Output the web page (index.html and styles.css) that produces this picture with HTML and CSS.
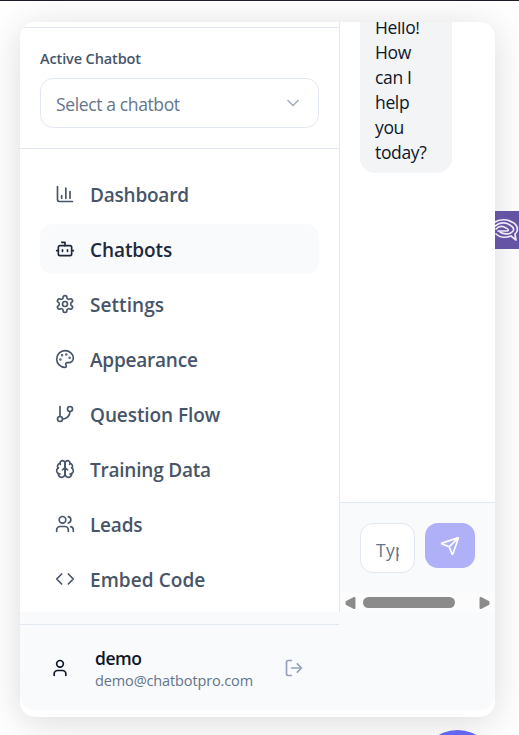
FILE: index.html
```html
<!DOCTYPE html>
<html lang="en">
<head>
<meta charset="utf-8">
<title>Chatbots</title>
<link rel="stylesheet" href="styles.css">
</head>
<body>
<div class="card">
  <div class="main">
    <aside class="sidebar">
      <section class="picker">
        <label class="picker-label">Active Chatbot</label>
        <div class="select"><span>Select a chatbot</span>
          <svg class="chevron" viewBox="0 0 24 24"><path d="m6 9 6 6 6-6"/></svg></div>
      </section>
      <nav class="nav">
        <a class="item"><svg class="icon" viewBox="0 0 24 24"><path d="M3 3v16a2 2 0 0 0 2 2h16M18 17V9M13 17V5M8 17v-3"/></svg><span class="tight">Dashboard</span></a>
        <a class="item active"><svg class="icon" viewBox="0 0 24 24"><path d="M12 8V4H8"/><rect width="16" height="12" x="4" y="8" rx="2"/><path d="M2 14h2M20 14h2M15 13v2M9 13v2"/></svg><span>Chatbots</span></a>
        <a class="item"><svg class="icon" viewBox="0 0 24 24"><path d="M12.22 2h-.44a2 2 0 0 0-2 2v.18a2 2 0 0 1-1 1.73l-.43.25a2 2 0 0 1-2 0l-.15-.08a2 2 0 0 0-2.73.73l-.22.38a2 2 0 0 0 .73 2.73l.15.1a2 2 0 0 1 1 1.72v.51a2 2 0 0 1-1 1.74l-.15.09a2 2 0 0 0-.73 2.73l.22.38a2 2 0 0 0 2.73.73l.15-.08a2 2 0 0 1 2 0l.43.25a2 2 0 0 1 1 1.73V20a2 2 0 0 0 2 2h.44a2 2 0 0 0 2-2v-.18a2 2 0 0 1 1-1.73l.43-.25a2 2 0 0 1 2 0l.15.08a2 2 0 0 0 2.73-.73l.22-.39a2 2 0 0 0-.73-2.73l-.15-.08a2 2 0 0 1-1-1.74v-.5a2 2 0 0 1 1-1.74l.15-.09a2 2 0 0 0 .73-2.73l-.22-.38a2 2 0 0 0-2.73-.73l-.15.08a2 2 0 0 1-2 0l-.43-.25a2 2 0 0 1-1-1.73V4a2 2 0 0 0-2-2z"/><circle cx="12" cy="12" r="3"/></svg><span class="loose">Settings</span></a>
        <a class="item"><svg class="icon" viewBox="0 0 24 24"><circle class="dot" cx="13.5" cy="6.5" r=".5"/><circle class="dot" cx="17.5" cy="10.5" r=".5"/><circle class="dot" cx="8.5" cy="7.5" r=".5"/><circle class="dot" cx="6.5" cy="12.5" r=".5"/><path d="M12 2C6.5 2 2 6.5 2 12s4.5 10 10 10c.926 0 1.648-.746 1.648-1.688 0-.437-.18-.835-.437-1.125-.29-.289-.438-.652-.438-1.125a1.64 1.64 0 0 1 1.668-1.668h1.996c3.051 0 5.555-2.503 5.555-5.554C21.965 6.012 17.461 2 12 2z"/></svg><span class="tight">Appearance</span></a>
        <a class="item"><svg class="icon" viewBox="0 0 24 24"><path d="M6 3v12"/><circle cx="18" cy="6" r="3"/><circle cx="6" cy="18" r="3"/><path d="M18 9a9 9 0 0 1-9 9"/></svg><span>Question Flow</span></a>
        <a class="item"><svg class="icon" viewBox="0 0 24 24"><path d="M12 5a3 3 0 1 0-5.997.125 4 4 0 0 0-2.526 5.77 4 4 0 0 0 .556 6.588A4 4 0 1 0 12 18Z"/><path d="M12 5a3 3 0 1 1 5.997.125 4 4 0 0 1 2.526 5.77 4 4 0 0 1-.556 6.588A4 4 0 1 1 12 18Z"/><path d="M15 13a4.5 4.5 0 0 1-3-4 4.5 4.5 0 0 1-3 4M17.599 6.5a3 3 0 0 0 .399-1.375M6.003 5.125A3 3 0 0 0 6.401 6.5M3.477 10.896a4 4 0 0 1 .585-.396M19.938 10.5a4 4 0 0 1 .585.396M6 18a4 4 0 0 1-1.967-.516M19.967 17.484A4 4 0 0 1 18 18"/></svg><span class="tight">Training Data</span></a>
        <a class="item"><svg class="icon" viewBox="0 0 24 24"><path d="M16 21v-2a4 4 0 0 0-4-4H6a4 4 0 0 0-4 4v2"/><circle cx="9" cy="7" r="4"/><path d="M22 21v-2a4 4 0 0 0-3-3.87M16 3.13a4 4 0 0 1 0 7.75"/></svg><span class="tight">Leads</span></a>
        <a class="item"><svg class="icon" viewBox="0 0 24 24"><path d="m16 18 6-6-6-6M8 6l-6 6 6 6"/></svg><span class="loose">Embed Code</span></a>
      </nav>
    </aside>
    <section class="chat">
      <div class="messages"><div class="bubble">Hello!<br>How<br>can I<br>help<br>you<br>today?</div></div>
      <div class="composer">
        <div class="input"><span>Type your message</span></div>
        <button class="send"><svg class="icon" viewBox="0 0 24 24"><path d="M14.536 21.686a.5.5 0 0 0 .937-.024l6.5-19a.496.496 0 0 0-.635-.635l-19 6.5a.5.5 0 0 0-.024.937l7.93 3.18a2 2 0 0 1 1.112 1.11zM21.854 2.147l-10.94 10.939"/></svg></button>
      </div>
      <div class="scrollbar">
        <svg class="arrow" viewBox="0 0 10 12"><path d="M8.500 1.500v9L1.500 7V5z"/></svg>
        <div class="track"><div class="thumb"></div></div>
        <svg class="arrow" viewBox="0 0 10 12"><path d="M1.500 1.500v9L8.500 7V5z"/></svg>
      </div>
    </section>
  </div>
  <footer class="footer">
    <div class="account">
      <svg class="icon user" viewBox="0 0 24 24"><path d="M19 21v-2a4 4 0 0 0-4-4H9a4 4 0 0 0-4 4v2"/><circle cx="12" cy="7" r="4"/></svg>
      <div class="who"><div class="name">demo</div><div class="email">demo@chatbotpro.com</div></div>
      <svg class="icon logout" viewBox="0 0 24 24"><path d="M9 21H5a2 2 0 0 1-2-2V5a2 2 0 0 1 2-2h4M16 17l5-5-5-5M21 12H9"/></svg>
    </div>
  </footer>
</div>
<div class="widget"><svg viewBox="0 0 24 38"><path d="M0 11C5 8 12 8 17 11c6 3 7 9 3 12l1 6-5-4C10 27 4 26 1 23"/><path d="M0 15c5-4 11-4 15-1 5 3 4 6 2 7-3 3-9 2-12 0"/><path d="M1 18c3-3 7-3 10-1 3 1 3 3 0 3H3"/></svg></div>
<div class="launcher"><div class="launcher-circle"></div></div>
</body>
</html>
```

FILE: styles.css
```css
* { box-sizing: border-box; }
body {
  margin: 0; height: 735px; overflow: hidden; position: relative;
  padding: 21px 24px 0 20px; border-top: 1px solid #1b1d27; background: #fff;
  font-family: "Open Sans", "Noto Sans", sans-serif; color: #0f172a;
}
.card {
  width: 475px; height: 695px; border-radius: 15px; overflow: hidden; background: #fff;
  box-shadow: 0 5px 38px rgba(0,0,0,.15);
}
.main { display: flex; height: 590px; }
.sidebar { width: 320px; padding-top: 5px; border-right: 1px solid #e2e8f0; }
.picker { height: 122px; padding: 20px; border: solid #e2e8f0; border-width: 1px 0; }
.picker-label { display: block; height: 30px; font-size: 14.5px; line-height: 22px; font-weight: 600; color: #475569; letter-spacing: -.12px; }
.select {
  display: flex; align-items: center; justify-content: space-between; height: 50px;
  padding: 0 15px; border: 1px solid #e2e8f0; border-radius: 13px;
  font-size: 17.5px; color: #64748b; letter-spacing: -.37px;
}
.select span { padding-top: 2px; }
.chevron { width: 20px; height: 20px; fill: none; stroke: #a5b0c1; stroke-width: 2; stroke-linecap: round; stroke-linejoin: round; }
.nav { display: flex; flex-direction: column; gap: 5px; padding: 20px 20px 0; }
.item {
  display: flex; align-items: center; gap: 15px; flex: none; height: 50px; padding: 0 15px;
  border-radius: 13px; color: #475569; font-size: 19px; font-weight: 600; white-space: nowrap;
}
.item span { padding-top: 2px; letter-spacing: -.08px; }
.item .tight { letter-spacing: -.22px; }
.item .loose { letter-spacing: .06px; }
.item.active { background: #f8fafc; color: #1e293b; }
.icon {
  flex: none; width: 20px; height: 20px; fill: none; stroke: currentColor;
  stroke-width: 2; stroke-linecap: round; stroke-linejoin: round;
}
.dot { fill: currentColor; }
.chat { width: 155px; display: flex; flex-direction: column; }
.messages { height: 480px; padding: 0 20px; overflow: hidden; }
.bubble {
  width: 92px; height: 168px; margin-top: -17px; padding: 10px 15px 8px; border-radius: 15px;
  background: #f3f4f6; font-size: 17.5px; line-height: 25px; letter-spacing: -.35px; white-space: nowrap;
}
.composer {
  display: flex; gap: 10px; height: 91px; padding: 20px; background: #f8fafc; border-top: 1px solid #e2e8f0;
}
.input {
  width: 55px; height: 50px; padding: 3px 15px 0; border: 1px solid #e2e8f0; border-radius: 13px;
  background: #fff; color: #64748b; font-size: 17.5px; line-height: 46px; white-space: nowrap;
}
.input span { display: block; overflow: hidden; letter-spacing: .3px; }
.send {
  display: flex; align-items: center; justify-content: center; width: 50px; height: 45px;
  padding: 0; border: 0; border-radius: 13px; background: #afb0f7; color: #fff;
}
.scrollbar { display: flex; align-items: center; height: 19px; padding: 0 5px; background: #fcfcfc; }
.arrow { width: 11px; height: 14px; flex: none; fill: #8b8b8b; stroke: #8b8b8b; stroke-width: 2; stroke-linejoin: round; }
.track { flex: 1; padding-left: 7px; }
.thumb { width: 92px; height: 11px; border-radius: 6px; background: #8b8b8b; }
.footer { height: 98px; padding-top: 12px; background: #f8fafc; border-radius: 0 0 15px 15px; }
.account { display: flex; align-items: center; width: 319px; height: 86px; padding-left: 30px; border-top: 1px solid #e2e8f0; }
.who { width: 189px; margin-left: 25px; padding-top: 3px; }
.name { font-size: 17.5px; line-height: 22px; font-weight: 600; letter-spacing: -.5px; }
.email { font-size: 14.5px; line-height: 23px; color: #64748b; letter-spacing: -.13px; }
.logout { color: #94a3b8; }
.widget { position: absolute; right: 0; top: 210px; width: 24px; height: 38px; background: #6554a3; }
.widget svg { display: block; width: 24px; height: 38px; fill: none; stroke: #eeeaf8; stroke-width: 1.7; stroke-linecap: round; stroke-linejoin: round; }
.launcher { position: absolute; left: 420px; bottom: 0; width: 75px; height: 5px; overflow: hidden; }
.launcher-circle { width: 75px; height: 75px; border-radius: 50%; background: #6366f1; }
```
